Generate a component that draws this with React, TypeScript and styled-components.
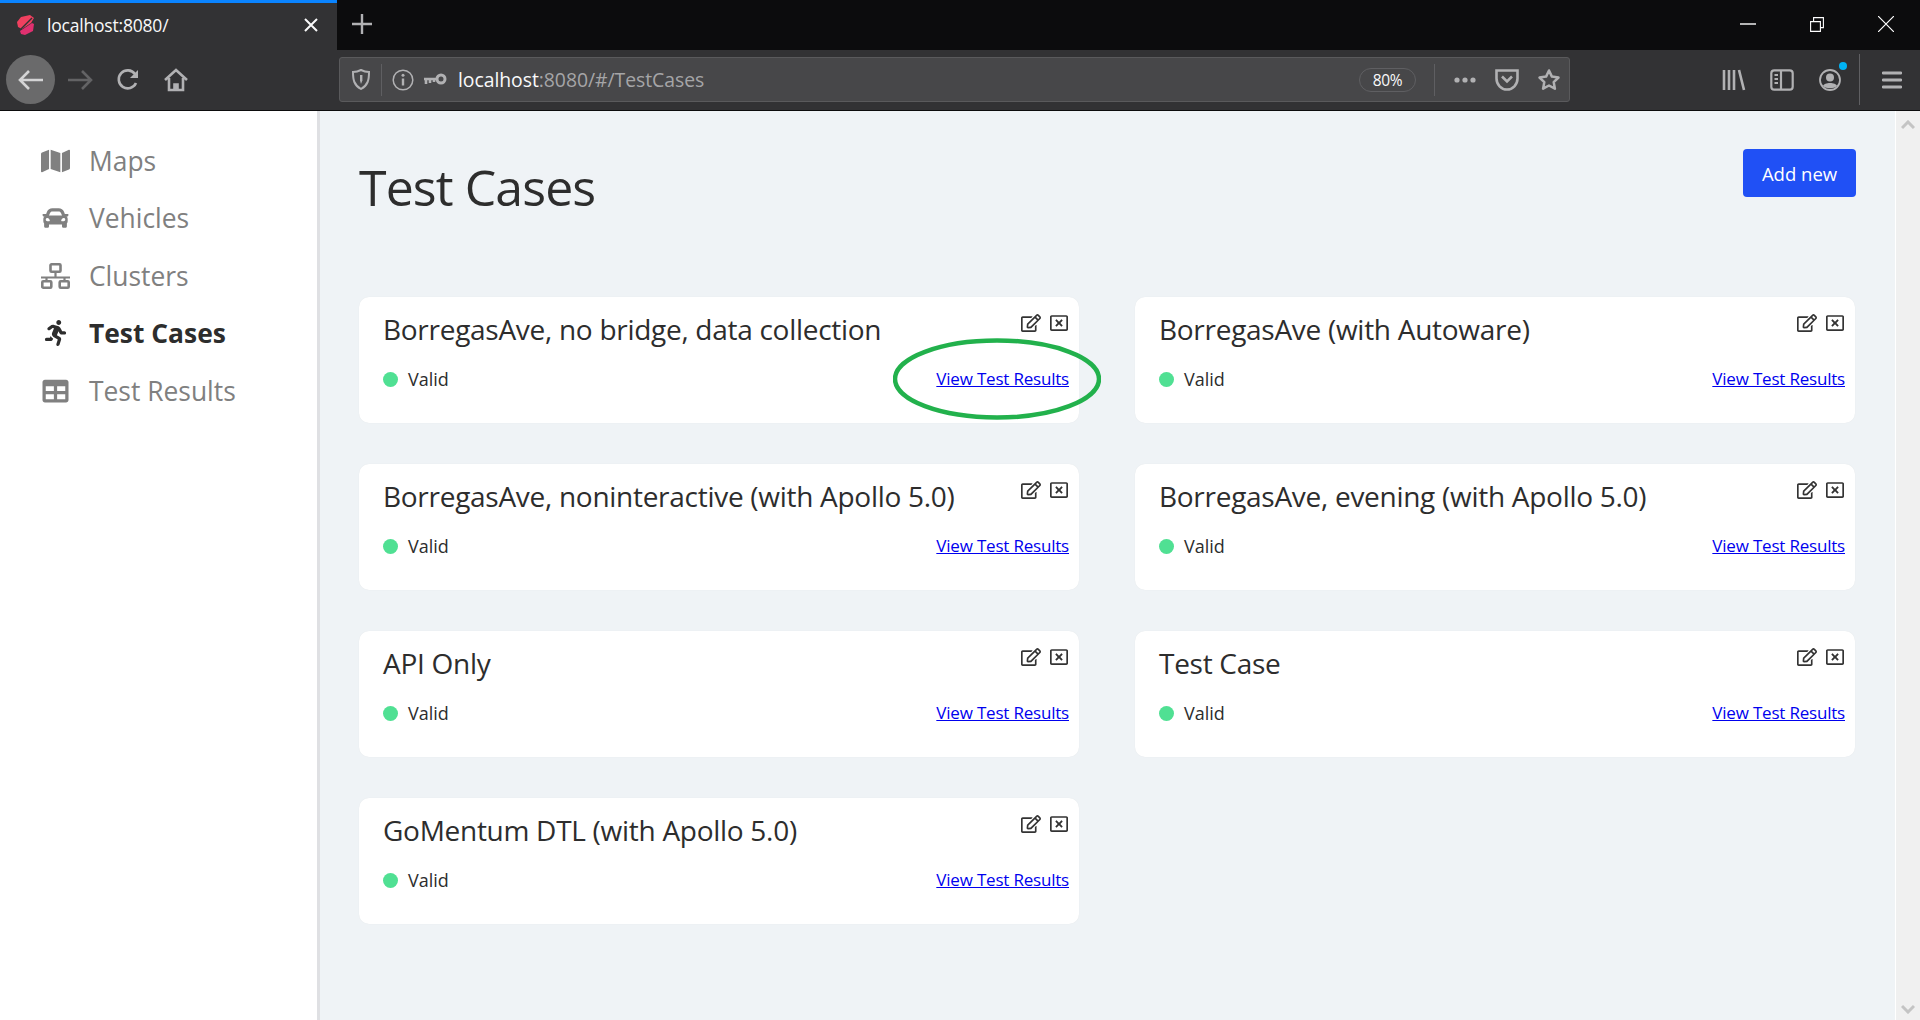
import type { ReactNode } from 'react';
import styled, { createGlobalStyle } from 'styled-components';
import { FaMap, FaCar, FaRunning, FaTable, FaRegEdit, FaRegWindowClose } from 'react-icons/fa';

const GlobalStyle = createGlobalStyle`
  * {
    box-sizing: border-box;
  }

  html, body {
    margin: 0;
    height: 100%;
    overflow: hidden;
    font-family: "Open Sans", "Noto Sans", sans-serif;
  }
`;

const Page = styled.div`
  display: flex;
  flex-direction: column;
  height: 1020px;
  background: #eff3f6;
`;

const TabStrip = styled.div`
  display: flex;
  align-items: stretch;
  height: 50px;
  background: #0c0c0d;
`;

const Tab = styled.div`
  display: flex;
  align-items: center;
  width: 337px;
  padding: 0 19px 3px 17px;
  background: #323234;
  border-top: 3px solid #0a84ff;
  color: #f9f9fa;
  font-size: 17.5px;
`;

const TabTitle = styled.span`
  flex: 1;
  margin-left: 12px;
  letter-spacing: -0.2px;
`;

const NewTab = styled.div`
  display: flex;
  align-items: center;
  justify-content: center;
  width: 50px;
  padding-bottom: 2px;
`;

const WindowControls = styled.div`
  display: flex;
  align-items: center;
  margin-left: auto;
  padding-bottom: 2px;
`;

const WindowButton = styled.div`
  display: flex;
  align-items: center;
  justify-content: center;
  width: 69px;
`;

const Toolbar = styled.div`
  display: flex;
  align-items: center;
  height: 61px;
  padding: 0 0 1px 6px;
  background: #323234;
  border-bottom: 1px solid #0c0c0d;
`;

const ToolButton = styled.div`
  display: flex;
  align-items: center;
  justify-content: center;
  flex: none;
  position: relative;
  width: 48px;
  height: 48px;
`;

const BackButton = styled(ToolButton)`
  width: 49px;
  height: 49px;
  margin-right: 1px;
  border-radius: 50%;
  background: #6a6a6b;
`;

const MenuButton = styled(ToolButton)`
  margin-left: 8px;
`;

const UrlBar = styled.div`
  display: flex;
  align-items: center;
  flex: none;
  width: 1231px;
  height: 45px;
  margin: 0 140px 0 139px;
  background: #474749;
  border: 1px solid #5a5a5c;
  border-radius: 3px;
`;

const UrlIcon = styled.div<{ $width: number }>`
  display: flex;
  align-items: center;
  justify-content: center;
  flex: none;
  width: ${(p) => p.$width}px;
`;

const Divider = styled.div<{ $height: number; $left?: number; $right?: number }>`
  flex: none;
  width: 1px;
  height: ${(p) => p.$height}px;
  margin-left: ${(p) => p.$left ?? 0}px;
  margin-right: ${(p) => p.$right ?? 0}px;
  background: #5f5f62;
`;

const UrlText = styled.div`
  flex: 1;
  margin-left: 11px;
  color: #a5a5a7;
  font-size: 19.4px;
  letter-spacing: -0.05px;
`;

const UrlHost = styled.span`
  color: #f9f9fa;
`;

const ZoomPill = styled.div`
  display: flex;
  align-items: center;
  justify-content: center;
  flex: none;
  width: 57px;
  height: 24px;
  margin-right: 18px;
  border: 1px solid #5f5f62;
  border-radius: 12px;
  color: #f9f9fa;
  font-size: 15.5px;
  letter-spacing: -0.3px;
`;

const NotifyDot = styled.span`
  position: absolute;
  top: 6px;
  right: 7px;
  width: 8px;
  height: 8px;
  border-radius: 50%;
  background: #00b3f4;
`;

const Body = styled.div`
  display: flex;
  flex: 1;
  min-height: 0;
`;

const Sidebar = styled.nav`
  flex: none;
  width: 320px;
  padding: 21px 0 0 41px;
  background: #fff;
  border-right: 3px solid #dfe0e3;
`;

const NavItem = styled.div<{ $active?: boolean }>`
  display: flex;
  align-items: center;
  gap: 19px;
  height: 57.5px;
  color: ${(p) => (p.$active ? '#2d2d2d' : '#808080')};
  font-size: 26.4px;
  font-weight: ${(p) => (p.$active ? 700 : 400)};

  svg {
    flex: none;
    width: 29px;
    height: 26px;
  }
`;

const Main = styled.main`
  flex: 1;
  padding: 38px 40px 0 39px;
`;

const Header = styled.header`
  display: flex;
  align-items: flex-start;
  justify-content: space-between;
  height: 148px;
`;

const Title = styled.h1`
  margin: 4px 0 0;
  color: #2d2d2d;
  font-size: 50px;
  font-weight: 400;
  letter-spacing: -0.9px;
  line-height: 68px;
`;

const AddButton = styled.button`
  width: 113px;
  height: 48px;
  margin-right: -1px;
  padding: 0;
  background: #2050f5;
  border: none;
  border-radius: 4px;
  color: #fff;
  font-family: inherit;
  font-size: 18.5px;
`;

const CardGrid = styled.div`
  display: grid;
  grid-template-columns: 720px 720px;
  grid-auto-rows: 126px;
  column-gap: 56px;
  row-gap: 41px;
`;

const Card = styled.article`
  position: relative;
  display: flex;
  flex-direction: column;
  padding: 11px 10px 0 24px;
  background: #fff;
  border-radius: 10px;
  box-shadow: 0 0 1px rgba(0, 0, 0, 0.08);
`;

const CardTop = styled.div`
  display: flex;
  align-items: flex-start;
  justify-content: space-between;
  height: 52px;
`;

const CardTitle = styled.h2`
  margin: 0;
  color: #2d2d2d;
  font-size: 28px;
  font-weight: 400;
  letter-spacing: -0.28px;
  line-height: 42px;
`;

const CardActions = styled.div`
  display: flex;
  align-items: center;
  gap: 8px;
  padding-top: 6px;
  color: #333;

  svg {
    width: 20px;
    height: 18px;
  }
`;

const CardBottom = styled.div`
  display: flex;
  align-items: center;
  justify-content: space-between;
  margin-top: 5px;
`;

const Status = styled.div`
  display: flex;
  align-items: center;
  gap: 10px;
  padding-top: 2px;
  color: #2d2d2d;
  font-size: 18px;
`;

const StatusDot = styled.span`
  width: 15px;
  height: 15px;
  border-radius: 50%;
  background: #50e093;
`;

const ResultsLink = styled.a`
  color: #0000ee;
  font-size: 17px;
  letter-spacing: -0.2px;
  text-decoration: underline;
`;

const Highlight = styled.svg`
  position: absolute;
  left: 534px;
  top: 41px;
  pointer-events: none;
`;

const Scrollbar = styled.div`
  display: flex;
  flex: none;
  flex-direction: column;
  align-items: center;
  justify-content: space-between;
  width: 25px;
  padding: 9px 0 6px;
  background: #f0f0f0;
  border-left: 1px solid #fff;
`;

const icon = '#b1b1b3';

function Favicon() {
  return (
    <svg width="18" height="20" viewBox="0 0 18 20">
      <path d="M4 2 13 0l4 3-3 5-9 6-4-2-1-5z" fill="#f0405f" />
      <path d="M15 8l2 1-1 7-8 4-4-1-1-3z" fill="#e0306f" />
      <path d="M4 14 15 3" stroke="#323234" strokeWidth="1.4" />
    </svg>
  );
}

function ClustersIcon() {
  return (
    <svg viewBox="0 0 29 26" fill="none" stroke="currentColor" strokeWidth="2.6">
      <rect x="9.5" y="1.3" width="10" height="7.4" rx="1" />
      <path d="M14.5 9v5M0 14.500h29M5.500 14.500v4M23.500 14.500v4" strokeWidth="2.2" />
      <rect x="1.300" y="18.300" width="9" height="6.400" rx="1" />
      <rect x="18.700" y="18.300" width="9" height="6.400" rx="1" />
    </svg>
  );
}

function ToolIcon({ children, w = 24, h = 24 }: { children: ReactNode; w?: number; h?: number }) {
  return (
    <svg width={w} height={h} viewBox={`0 0 ${w} ${h}`} fill="none" stroke={icon} strokeWidth="2.2">
      {children}
    </svg>
  );
}

const testCases = [
  'BorregasAve, no bridge, data collection',
  'BorregasAve (with Autoware)',
  'BorregasAve, noninteractive (with Apollo 5.0)',
  'BorregasAve, evening (with Apollo 5.0)',
  'API Only',
  'Test Case',
  'GoMentum DTL (with Apollo 5.0)',
];

const navItems = [
  { label: 'Maps', Icon: FaMap },
  { label: 'Vehicles', Icon: FaCar },
  { label: 'Clusters', Icon: ClustersIcon },
  { label: 'Test Cases', Icon: FaRunning, active: true },
  { label: 'Test Results', Icon: FaTable },
];

export default function App() {
  return (
    <Page>
      <GlobalStyle />
      <TabStrip>
        <Tab>
          <Favicon />
          <TabTitle>localhost:8080/</TabTitle>
          <svg width="14" height="14" viewBox="0 0 14 14" stroke="#f9f9fa" strokeWidth="2">
            <path d="M1 1l12 12M13 1 1 13" />
          </svg>
        </Tab>
        <NewTab>
          <svg width="20" height="20" viewBox="0 0 20 20" stroke="#b1b1b3" strokeWidth="2.4">
            <path d="M10 0v20M0 10h20" />
          </svg>
        </NewTab>
        <WindowControls>
          <WindowButton>
            <svg width="16" height="2" viewBox="0 0 16 2" stroke="#fff" strokeWidth="1.4">
              <path d="M0 1h16" />
            </svg>
          </WindowButton>
          <WindowButton>
            <svg width="14" height="15" viewBox="0 0 14 15" fill="none" stroke="#fff" strokeWidth="1.1">
              <path d="M.6 4.600h9.800v9.800H.6zM3.600 4.600V.6h9.800v10h-3" />
            </svg>
          </WindowButton>
          <WindowButton>
            <svg width="16" height="16" viewBox="0 0 16 16" stroke="#fff" strokeWidth="1.2">
              <path d="M0 0l16 16M16 0 0 16" />
            </svg>
          </WindowButton>
        </WindowControls>
      </TabStrip>

      <Toolbar>
        <BackButton>
          <ToolIcon w={26} h={22}>
            <path d="M25 11H2M11 2l-9 9 9 9" stroke="#d4d4d5" strokeWidth="2.6" />
          </ToolIcon>
        </BackButton>
        <ToolButton>
          <ToolIcon w={26} h={22}>
            <path d="M1 11h23M15 2l9 9-9 9" stroke="#636365" strokeWidth="2.6" />
          </ToolIcon>
        </ToolButton>
        <ToolButton>
          <ToolIcon>
            <path d="M20 15a9 9 0 1 1-1-9l2 2" strokeWidth="2.6" />
            <path d="M22 2v8h-8z" fill={icon} stroke="none" />
          </ToolIcon>
        </ToolButton>
        <ToolButton>
          <ToolIcon>
            <path d="M1 12 12 2l11 10M5 10v12h14V10" strokeWidth="2.6" />
            <path d="M10 22v-6h4v6" strokeWidth="1.6" fill={icon} />
          </ToolIcon>
        </ToolButton>

        <UrlBar>
          <UrlIcon $width={41}>
            <svg width="18" height="21" viewBox="0 0 18 21" fill="none">
              <path d="M9 1c3 1.600 5 2 8 2 0 8-1 13-8 17C2 16 1 11 1 3c3 0 5-.4 8-2z" stroke={icon} strokeWidth="2" />
              <path d="M8 6h2.400v5.500L9 15l-1-3.500z" fill={icon} />
            </svg>
          </UrlIcon>
          <Divider $height={32} />
          <UrlIcon $width={41}>
            <svg width="22" height="22" viewBox="0 0 22 22" fill="none" stroke={icon}>
              <circle cx="11" cy="11" r="9.800" strokeWidth="1.500" />
              <path d="M11 9.500v7" strokeWidth="2.400" />
              <circle cx="11" cy="6.300" r="1.500" fill={icon} stroke="none" />
            </svg>
          </UrlIcon>
          <UrlIcon $width={24}>
            <svg width="24" height="14" viewBox="0 0 24 14" fill="none" stroke={icon}>
              <circle cx="18" cy="6" r="4" strokeWidth="3" />
              <path d="M14 6H1M3 6v5M7 6v4M11 6v3" strokeWidth="2.600" />
            </svg>
          </UrlIcon>
          <UrlText>
            <UrlHost>localhost</UrlHost>:8080/#/TestCases
          </UrlText>
          <ZoomPill>80%</ZoomPill>
          <Divider $height={32} $right={10} />
          <UrlIcon $width={40}>
            <svg width="22" height="6" viewBox="0 0 22 6" fill={icon}>
              <circle cx="3" cy="3" r="2.600" />
              <circle cx="11" cy="3" r="2.600" />
              <circle cx="19" cy="3" r="2.600" />
            </svg>
          </UrlIcon>
          <UrlIcon $width={44}>
            <svg width="24" height="22" viewBox="0 0 24 22" fill="none" stroke={icon}>
              <path d="M1.500 1.500h21v8a10.500 11 0 0 1-21 0z" strokeWidth="2.600" />
              <path d="M7 7.500l5 5 5-5" strokeWidth="2.600" />
            </svg>
          </UrlIcon>
          <UrlIcon $width={40}>
            <svg width="24" height="24" viewBox="0 0 24 24" fill="none" stroke={icon}>
              <path
                d="M12 2.500l2.900 6.100 6.600.9-4.800 4.600 1.200 6.600-5.900-3.200-5.900 3.200 1.200-6.600-4.800-4.600 6.600-.9z"
                strokeWidth="2.500"
                strokeLinejoin="round"
              />
            </svg>
          </UrlIcon>
        </UrlBar>

        <ToolButton>
          <ToolIcon>
            <path d="M2 2v20M7 2v20M12 2v20M17 2l5 20" strokeWidth="2.600" />
          </ToolIcon>
        </ToolButton>
        <ToolButton>
          <ToolIcon>
            <rect x="1.300" y="2.300" width="21.400" height="19.400" rx="3" />
            <path d="M11 3v18" />
            <path d="M4.500 7H8M4.500 11H8M4.500 15H8" strokeWidth="1.800" />
          </ToolIcon>
        </ToolButton>
        <ToolButton>
          <ToolIcon>
            <circle cx="12" cy="12" r="10" strokeWidth="1.800" />
            <circle cx="12" cy="9.500" r="4" fill={icon} stroke="none" />
            <path d="M5 18c1-4 13-4 14 0-3 3-11 3-14 0z" fill={icon} stroke="none" />
          </ToolIcon>
          <NotifyDot />
        </ToolButton>
        <Divider $height={51} $left={5} />
        <MenuButton>
          <ToolIcon w={20} h={20}>
            <path d="M1 3h18M1 10h18M1 17h18" strokeWidth="2.800" strokeLinecap="round" />
          </ToolIcon>
        </MenuButton>
      </Toolbar>

      <Body>
        <Sidebar>
          {navItems.map(({ label, Icon, active }) => (
            <NavItem key={label} $active={active}>
              <Icon />
              {label}
            </NavItem>
          ))}
        </Sidebar>

        <Main>
          <Header>
            <Title>Test Cases</Title>
            <AddButton type="button">Add new</AddButton>
          </Header>
          <CardGrid>
            {testCases.map((name, index) => (
              <Card key={name}>
                <CardTop>
                  <CardTitle>{name}</CardTitle>
                  <CardActions>
                    <FaRegEdit />
                    <FaRegWindowClose />
                  </CardActions>
                </CardTop>
                <CardBottom>
                  <Status>
                    <StatusDot />
                    Valid
                  </Status>
                  <ResultsLink href="#">View Test Results</ResultsLink>
                </CardBottom>
                {index === 0 && (
                  <Highlight width="208" height="82" viewBox="0 0 208 82" fill="none">
                    <ellipse cx="104" cy="41" rx="102" ry="38.500" stroke="#22b14c" strokeWidth="4.500" />
                  </Highlight>
                )}
              </Card>
            ))}
          </CardGrid>
        </Main>

        <Scrollbar>
          <svg width="14" height="10" viewBox="0 0 14 10" fill="none" stroke="#c4c4c4" strokeWidth="3">
            <path d="M1 8l6-6 6 6" />
          </svg>
          <svg width="14" height="10" viewBox="0 0 14 10" fill="none" stroke="#c4c4c4" strokeWidth="3">
            <path d="M1 2l6 6 6-6" />
          </svg>
        </Scrollbar>
      </Body>
    </Page>
  );
}
